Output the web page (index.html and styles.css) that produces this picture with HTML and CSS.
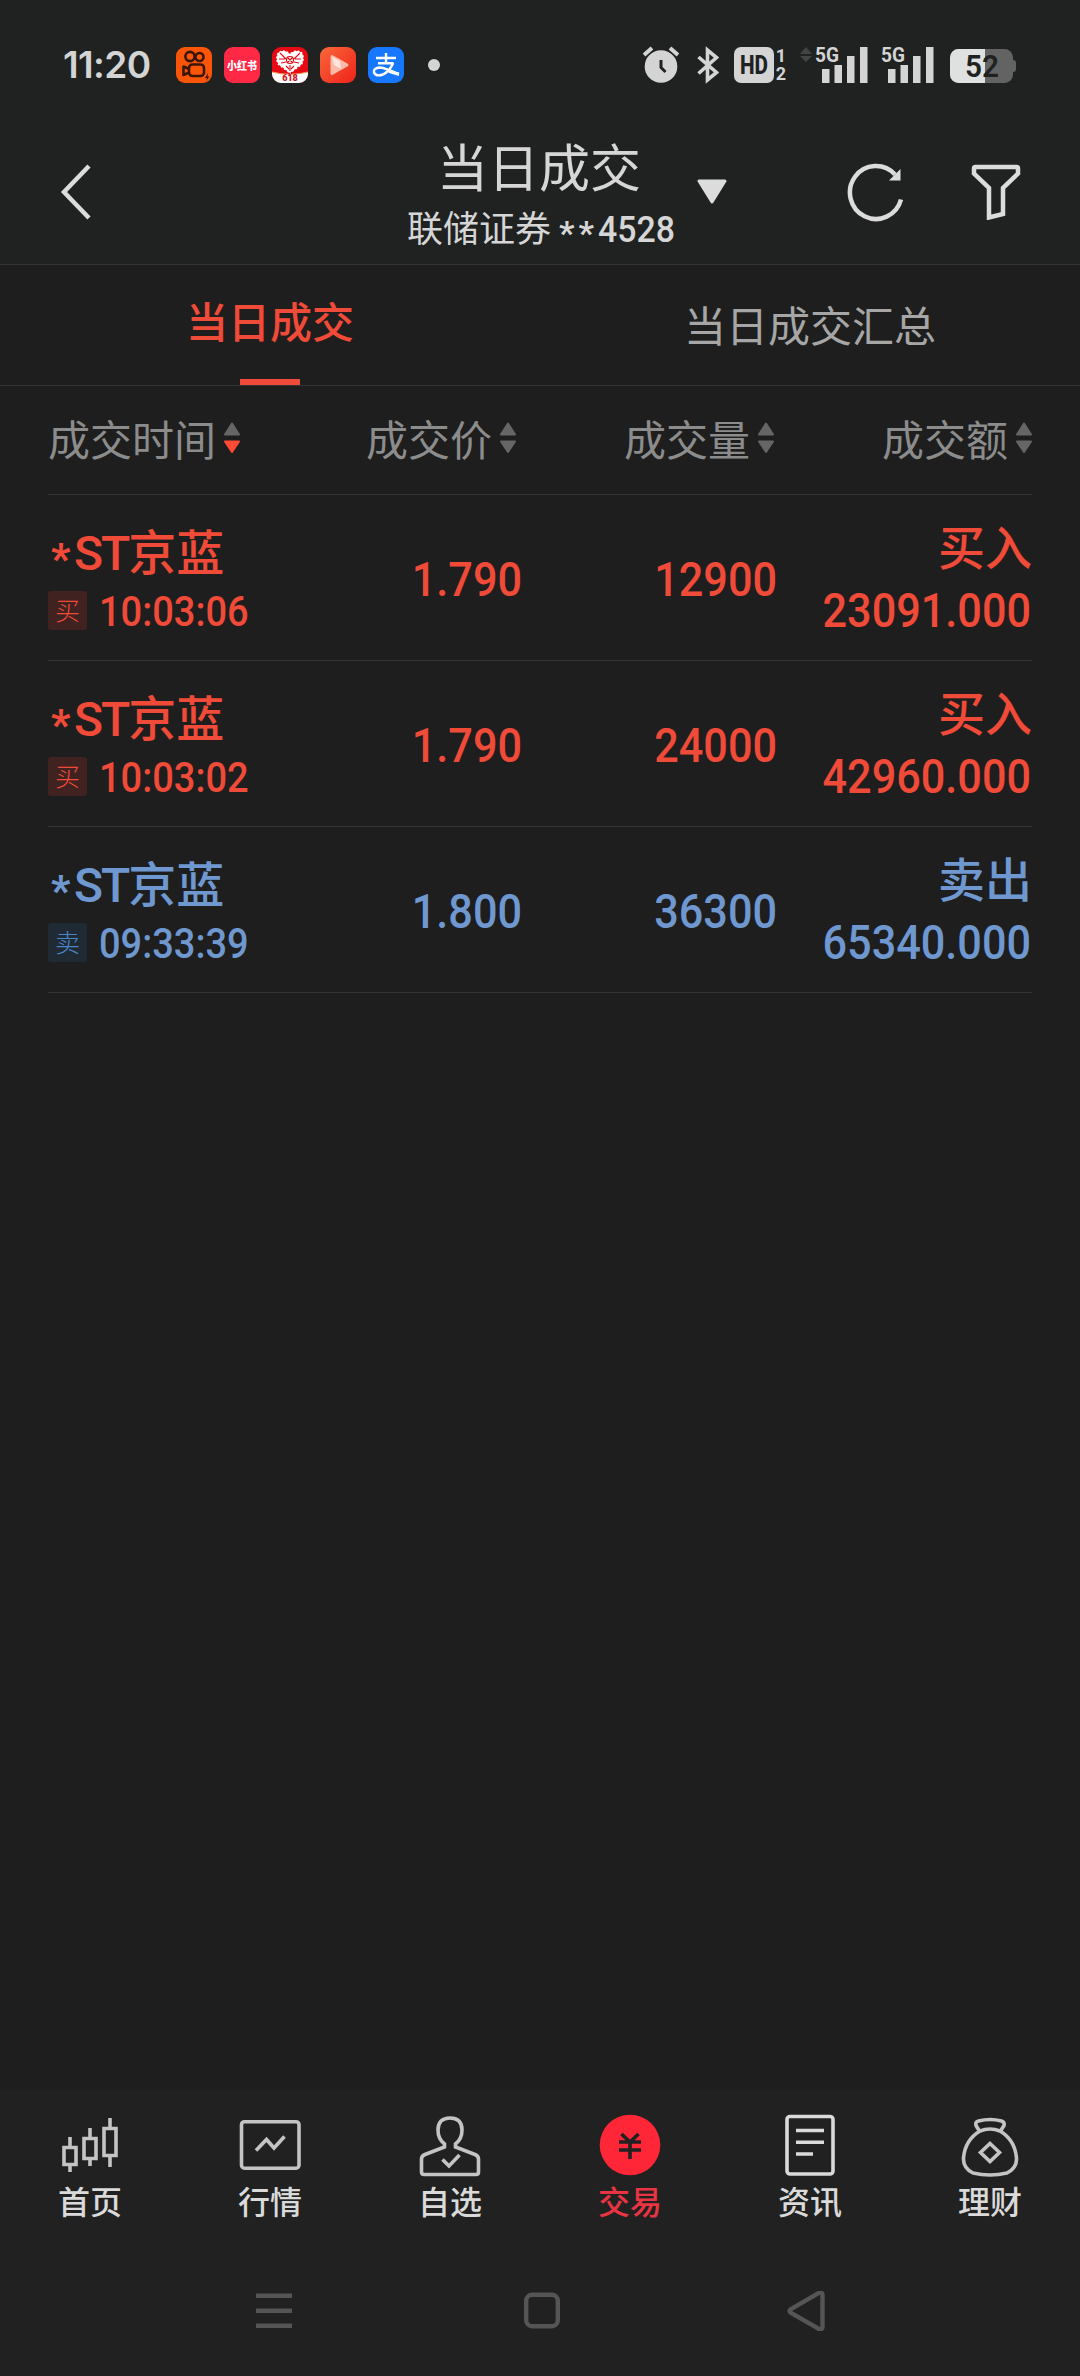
FILE: index.html
```html
<!DOCTYPE html>
<html lang="zh-CN">

<head>
    <meta charset="UTF-8">
    <meta name="viewport" content="width=device-width, initial-scale=1.0">
    <title>当日成交</title>
    <link rel="stylesheet" href="styles.css">
</head>

<body>
    <div class="top">
        <div class="status-bar">
            <span class="clock">11:20</span>
            <div class="app-icons">
                <svg width="36" height="36" viewBox="0 0 36 36">
                    <rect width="36" height="36" rx="9" fill="#fb5607" />
                    <g fill="none" stroke="#3a1508" stroke-width="2.6">
                        <circle cx="14" cy="9.5" r="4.6" />
                        <circle cx="23.5" cy="10" r="4" />
                        <rect x="13" y="17.5" width="15" height="11.5" rx="3.5" />
                        <path d="M13 22 L7.5 19.5 V28 L13 25.5" stroke-linejoin="round" />
                    </g>
                    <path d="M32 26 L29 31 H31 L30 34 L33.5 29.5 H31.5 Z" fill="#3a1508" />
                </svg>
                <svg width="36" height="36" viewBox="0 0 36 36">
                    <rect width="36" height="36" rx="9" fill="#ff2845" />
                    <text x="18" y="22.5" class="logo-text" font-size="11" textLength="30" lengthAdjust="spacingAndGlyphs">小红书</text>
                </svg>
                <svg width="36" height="36" viewBox="0 0 36 36">
                    <rect width="36" height="36" rx="9" fill="#e60a14" />
                    <path d="M0 25 Q18 29.5 36 25 V27 A9 9 0 0 1 27 36 H9 A9 9 0 0 1 0 27 Z" fill="#fff" />
                    <path d="M0 25 Q18 29.5 36 25" fill="none" stroke="#f0a060" stroke-width="1.2" />
                    <path d="M18 27 L6 18 Q2 11 6 5 Q12 1 18 6 Q24 1 30 5 Q34 11 30 18 Z" fill="#fff" />
                    <path d="M18 27 L6 18 Q2 11 6 5 Q12 1 18 6 Q24 1 30 5 Q34 11 30 18 Z" fill="none" stroke="#e60a14" stroke-width="1.6" stroke-dasharray="2 2" />
                    <g fill="none" stroke="#e60a14" stroke-width="1.1">
                        <circle cx="18" cy="13" r="3.5" />
                        <path d="M15 10 L21 16 M21 10 L15 16 M8 6 L14 12 M28 6 L22 12 M7 12 H13 M23 12 H29 M9 16 L14 15 M27 16 L22 15 M18 18 V24 M14 19 L17 22 M22 19 L19 22" />
                    </g>
                    <text x="18" y="34.3" class="logo-618" font-size="9">618</text>
                </svg>
                <svg width="36" height="36" viewBox="0 0 36 36">
                    <defs>
                        <linearGradient id="play-bg" x1="0" y1="0" x2="1" y2="1">
                            <stop offset="0" stop-color="#f9683a" />
                            <stop offset="1" stop-color="#ef2219" />
                        </linearGradient>
                    </defs>
                    <rect width="36" height="36" rx="9" fill="url(#play-bg)" />
                    <path d="M12 9.5 L27 18 L12 26.5 Z" fill="#fbb9a6" stroke="#fbb9a6" stroke-width="3" stroke-linejoin="round" />
                    <path d="M12 9.5 L20 14 L21 22 L14 18 Z" fill="#fde4dc" />
                </svg>
                <svg width="36" height="36" viewBox="0 0 36 36">
                    <rect width="36" height="36" rx="9" fill="#1677ff" />
                    <g fill="none" stroke="#fff" stroke-width="2.4">
                        <path d="M8 11 H28 M18 6 V16 M10 16.3 H25.5" />
                        <path d="M25 16 Q22 24 15 27.5 Q8 30 6 25.5 Q5 21 12 20.5 Q17 21 31 27" />
                    </g>
                    <path d="M19 23 L31 25.5 V29 L21 26 Z" fill="#fff" />
                </svg>
            </div>
            <span class="dot"></span>

            <div class="system-icons">
                <svg class="alarm" width="36" height="38" viewBox="0 0 36 38">
                    <circle cx="18" cy="20.5" r="16.3" />
                    <path d="M1 9 L9 2 M27 2 L35 9" class="alarm-bells" />
                    <path d="M18 14 V21.5 L22.5 26" class="alarm-hands" />
                </svg>
                <svg class="bluetooth" width="22" height="38" viewBox="0 0 22 38">
                    <path d="M1.5 11 L19.5 26.5 L10.5 34 V4 L19.5 11.5 L1.5 27.5" />
                </svg>
                <svg class="hd" width="52" height="38" viewBox="0 0 52 38">
                    <rect x="0" y="1" width="40" height="36" rx="7" />
                    <text x="20" y="28" class="hd-text" textLength="28" lengthAdjust="spacingAndGlyphs">HD</text>
                    <text x="47" y="16" class="sim-text">1</text>
                    <text x="47" y="34" class="sim-text">2</text>
                </svg>
                <svg class="signal first" width="70" height="42" viewBox="0 -4 70 42">
                    <path d="M0 8 L6 1 L12 8 Z M0 10 L6 16 L12 10 Z" fill="#444" />
                    <text x="15" y="16" class="net-text" textLength="24" lengthAdjust="spacingAndGlyphs">5G</text>
                    <path d="M22 23 h7.5 v14 h-7.5 Z M34.5 19 h7.5 v18 h-7.5 Z M47 10 h7.5 v27 h-7.5 Z M60 1 h7.5 v36 h-7.5 Z" />
                </svg>
                <svg class="signal second" width="56" height="42" viewBox="14 -4 56 42">
                    <text x="15" y="16" class="net-text" textLength="24" lengthAdjust="spacingAndGlyphs">5G</text>
                    <path d="M22 23 h7.5 v14 h-7.5 Z M34.5 19 h7.5 v18 h-7.5 Z M47 10 h7.5 v27 h-7.5 Z M60 1 h7.5 v36 h-7.5 Z" />
                </svg>
                <svg class="battery" width="67" height="38" viewBox="0 0 67 38">
                    <rect x="0" y="3" width="63" height="34" rx="8.5" fill="#636363" />
                    <path d="M63 14 q3 0 3 3 v6 q0 3 -3 3 Z" fill="#636363" />
                    <path d="M35 3 H8.5 A8.5 8.5 0 0 0 0 11.5 V28.5 A8.5 8.5 0 0 0 8.5 37 H35 Z" fill="#dfe1e0" />
                    <text x="32" y="30.5" class="battery-text" textLength="34" lengthAdjust="spacingAndGlyphs">52</text>
                </svg>
            </div>
        </div>

        <header>
            <button class="back" aria-label="返回">
                <svg width="32" height="56" viewBox="0 0 32 56">
                    <path d="M29 2 L4 28 L29 54" />
                </svg>
            </button>
            <div class="account">
                <h1>当日成交</h1>
                <p>联储证券 <span class="mask">**</span><span class="digits">4528</span></p>
            </div>
            <svg class="caret" width="30" height="25" viewBox="0 0 30 25">
                <path d="M2 2 H28 L15 23 Z" />
            </svg>
            <button class="refresh" aria-label="刷新">
                <svg width="60" height="60" viewBox="0 0 60 60">
                    <path d="M55 37.5 A26 26.5 0 1 1 49 12.5" />
                    <path d="M54.5 7 V18.5 H43 Z" class="arrow" />
                </svg>
            </button>
            <button class="filter" aria-label="筛选">
                <svg width="50" height="56" viewBox="0 0 50 56">
                    <path d="M4.5 3 H45.5 Q47 3 47 4.5 V9.5 L32 24 V50 L18 53.5 V24 L3 9.5 V4.5 Q3 3 4.5 3 Z" />
                </svg>
            </button>
        </header>
    </div>

    <nav class="tabs">
        <a class="tab active">当日成交</a>
        <a class="tab">当日成交汇总</a>
    </nav>

    <main>
        <div class="list-head">
            <div>成交时间<svg class="sort down" width="16" height="32" viewBox="0 0 16 32"><path d="M8 1.5 L15 12.5 H1 Z" /><path d="M8 30 L15 19.5 H1 Z" class="low" /></svg></div>
            <div>成交价<svg class="sort" width="16" height="32" viewBox="0 0 16 32"><path d="M8 1.5 L15 12.5 H1 Z" /><path d="M8 30 L15 19.5 H1 Z" class="low" /></svg></div>
            <div>成交量<svg class="sort" width="16" height="32" viewBox="0 0 16 32"><path d="M8 1.5 L15 12.5 H1 Z" /><path d="M8 30 L15 19.5 H1 Z" class="low" /></svg></div>
            <div>成交额<svg class="sort" width="16" height="32" viewBox="0 0 16 32"><path d="M8 1.5 L15 12.5 H1 Z" /><path d="M8 30 L15 19.5 H1 Z" class="low" /></svg></div>
        </div>

        <div class="deal buy">
            <div class="stock">
                <div class="name"><span class="star">*</span><span class="st">ST</span>京蓝</div>
                <div class="when"><span class="badge">买</span><span class="time">10:03:06</span></div>
            </div>
            <div class="num">1.790</div>
            <div class="num">12900</div>
            <div class="amount">
                <div class="side">买入</div>
                <div class="num">23091.000</div>
            </div>
        </div>

        <div class="deal buy">
            <div class="stock">
                <div class="name"><span class="star">*</span><span class="st">ST</span>京蓝</div>
                <div class="when"><span class="badge">买</span><span class="time">10:03:02</span></div>
            </div>
            <div class="num">1.790</div>
            <div class="num">24000</div>
            <div class="amount">
                <div class="side">买入</div>
                <div class="num">42960.000</div>
            </div>
        </div>

        <div class="deal sell">
            <div class="stock">
                <div class="name"><span class="star">*</span><span class="st">ST</span>京蓝</div>
                <div class="when"><span class="badge">卖</span><span class="time">09:33:39</span></div>
            </div>
            <div class="num">1.800</div>
            <div class="num">36300</div>
            <div class="amount">
                <div class="side">卖出</div>
                <div class="num">65340.000</div>
            </div>
        </div>
    </main>

    <footer>
        <nav class="menu">
            <a>
                <svg width="64" height="68" viewBox="0 0 64 68">
                    <path d="M6 35.5 H18 V52.5 H6 Z M12 25 V35 M12 53 V60 M26 26.5 H38 V46.5 H26 Z M32 16 V26 M32 47 V54 M46 16.5 H58 V43.5 H46 Z M52 6 V16 M52 44 V55" />
                </svg>
                首页
            </a>
            <a>
                <svg width="64" height="68" viewBox="0 0 64 68">
                    <rect x="3.5" y="9.7" width="57.5" height="46.5" rx="3" />
                    <path d="M18 38.5 L28.5 27.5 L36 36 L46.5 24.5" />
                </svg>
                行情
            </a>
            <a>
                <svg width="64" height="68" viewBox="0 0 64 68">
                    <path d="M26.5 35 V32 Q20 27 20 18 Q20 6 32 6 Q44 6 44 18 Q44 27 37.5 32 V35 L57 42.5 Q60.5 44 60.5 47 V60 Q60.5 62.5 58 62.5 H6 Q3.5 62.5 3.5 60 V47 Q3.5 44 7 42.5 Z" />
                    <path d="M24.5 47.5 L31 54 L41.5 43" />
                </svg>
                自选
            </a>
            <a class="current">
                <svg width="64" height="68" viewBox="0 0 64 68">
                    <circle cx="32" cy="33" r="30.3" />
                    <path d="M23.5 22 L32 30 L40.5 22 M21 30 H43 M21 38 H43 M32 29 V47" />
                </svg>
                交易
            </a>
            <a class="bright">
                <svg width="64" height="68" viewBox="0 0 64 68">
                    <rect x="9" y="4.5" width="46" height="57.5" rx="3" />
                    <path d="M18 18.5 H46 M18 30.2 H46 M18 42 H35" />
                </svg>
                资讯
            </a>
            <a>
                <svg width="64" height="68" viewBox="0 0 64 68">
                    <path d="M22 20 L18 13.5 Q17 10 20.5 9 Q32 6 43.5 9 Q47 10 46 13.5 L42 20" />
                    <path d="M22 19 Q32 15 42 19 Q57 28 58.5 46 Q59 56 49 61 Q32 65 15 61 Q5 56 5.5 46 Q7 28 22 19 Z" />
                    <path d="M32 31.5 L41.5 40.5 L32 49.5 L22.5 40.5 Z" />
                </svg>
                理财
            </a>
        </nav>
        <div class="gesture-bar">
            <svg width="36" height="40" viewBox="0 0 36 40">
                <path d="M0 4.7 H36 M0 19.7 H36 M0 34.7 H36" />
            </svg>
            <svg class="home" width="36" height="40" viewBox="0 0 36 40">
                <rect x="2.2" y="3.7" width="31.6" height="31.6" rx="6" />
            </svg>
            <svg width="38" height="40" viewBox="0 0 38 40">
                <path d="M32 1.8 Q35.5 1 35.5 4 V36 Q35.5 39 32 38 L4 22 Q1 20 4 18 Z" />
            </svg>
        </div>
    </footer>
</body>

</html>
```

FILE: styles.css
```css
:root {
    --bg: #1e1e1e;
    --bar: #202222;
    --footer: #212121;
    --line: #333;
    --light: #d6d6d6;
    --grey: #8c8c8c;
    --buy: #f04a38;
    --sell: #6e98cf;
    --red: #ff2638;
}

* {
    box-sizing: border-box;
    margin: 0;
    padding: 0;
}

body {
    display: flex;
    flex-direction: column;
    height: 2376px;
    overflow: hidden;
    background-color: var(--bg);
    color: var(--light);
    font-family: "Noto Sans CJK SC", sans-serif;
}

button {
    border: none;
    background: none;
    display: block;
}

svg {
    display: block;
    flex: none;
}

.top {
    height: 265px;
    background-color: var(--bar);
    border-bottom: 1px solid var(--line);
}

/* status bar */
.status-bar {
    display: flex;
    align-items: center;
    height: 130px;
    padding: 0 63px 0 63px;
}

.clock {
    width: 113px;
    font: 600 37px/40px "Inter", sans-serif;
    letter-spacing: -0.6px;
    color: #d4d4d4;
}

.app-icons {
    display: flex;
    gap: 12px;
}

.logo-text {
    fill: #fff;
    font-weight: 900;
    text-anchor: middle;
}

.logo-618 {
    fill: #d0101a;
    font-family: "Roboto", sans-serif;
    font-weight: 900;
    text-anchor: middle;
}

.dot {
    width: 12px;
    height: 12px;
    margin-left: 24px;
    border-radius: 50%;
    background-color: #d4d4d4;
}

.system-icons {
    display: flex;
    align-items: flex-end;
    margin: -4px 0 0 auto;
    fill: #d4d4d4;
    font-family: "Roboto", sans-serif;
}

.alarm-bells {
    stroke: #d4d4d4;
    stroke-width: 4;
}

.alarm-hands {
    fill: none;
    stroke: var(--bar);
    stroke-width: 3;
}

.bluetooth {
    margin-left: 18px;
    fill: none;
    stroke: #d4d4d4;
    stroke-width: 3.6;
}

.hd {
    margin-left: 15px;
}

.hd-text {
    fill: var(--bar);
    font-size: 25px;
    font-weight: 800;
    text-anchor: middle;
}

.sim-text {
    font-size: 18px;
    font-weight: 700;
    text-anchor: middle;
}

.net-text {
    font-size: 21px;
    font-weight: 700;
}

.signal.first {
    margin-left: 14px;
}

.signal.second {
    margin-left: 10px;
}

.battery {
    margin-left: 14px;
}

.battery-text {
    fill: var(--bar);
    font-size: 31px;
    font-weight: 600;
    text-anchor: middle;
}

/* title */
header {
    display: flex;
    align-items: flex-start;
    height: 134px;
    padding-left: 60px;
}

header button svg,
.menu svg,
.gesture-bar svg {
    fill: none;
    stroke: #dcdcdc;
    stroke-width: 4.5;
}

.back {
    margin-top: 34px;
}

.account {
    width: 264px;
    margin-left: 315px;
    text-align: center;
    white-space: nowrap;
}

h1 {
    margin-top: 5px;
    font-size: 51px;
    font-weight: 400;
    line-height: 60px;
}

.account p {
    margin-top: 7px;
    font-size: 36px;
    line-height: 48px;
    text-align: left;
}

.mask {
    font-family: "Roboto", sans-serif;
    font-size: 34px;
    font-weight: 700;
    line-height: 1;
    letter-spacing: 4px;
    vertical-align: -3px;
}

.digits {
    display: inline-block;
    font-family: "Roboto", sans-serif;
    font-weight: 500;
    transform: scaleX(0.94);
    transform-origin: left;
}

.caret {
    margin: 49px 0 0 26px;
    fill: #dcdcdc;
    stroke: #dcdcdc;
    stroke-width: 3;
    stroke-linejoin: round;
}

.refresh {
    margin: 32px 0 0 119px;
}

.refresh .arrow {
    fill: #dcdcdc;
    stroke: none;
}

.filter {
    margin: 34px 0 0 65px;
}

/* tabs */
.tabs {
    display: flex;
    height: 121px;
    border-bottom: 1px solid var(--line);
}

.tab {
    flex: 1;
    padding-top: 29px;
    color: #a6a6a6;
    font-size: 42px;
    line-height: 60px;
    text-align: center;
}

.tab.active {
    padding-top: 25px;
    color: var(--buy);
    font-weight: 500;
}

.tab.active::after {
    content: "";
    display: block;
    width: 60px;
    height: 6px;
    margin: 29px auto 0;
    background-color: var(--buy);
}

/* deals */
main {
    flex: 1;
    padding: 0 48px;
}

.list-head {
    display: grid;
    grid-template-columns: 210px 258px 258px 258px;
    height: 109px;
    border-bottom: 1px solid var(--line);
    color: var(--grey);
    font-size: 42px;
    line-height: 60px;
    padding-top: 22px;
    white-space: nowrap;
}

.list-head div {
    display: flex;
    align-items: center;
    justify-content: flex-end;
    height: 60px;
}

.list-head div:first-child {
    justify-content: flex-start;
}

.sort {
    margin-left: 8px;
    fill: #666;
    stroke: #666;
    stroke-width: 2;
    stroke-linejoin: round;
}

.sort.down .low {
    fill: #ff4a36;
    stroke: #ff4a36;
}

.deal {
    display: grid;
    grid-template-columns: 210px 264px 255px 255px;
    align-items: center;
    height: 166px;
    border-bottom: 1px solid var(--line);
    white-space: nowrap;
}

.buy {
    color: var(--buy);
}

.sell {
    color: var(--sell);
}

.stock {
    padding-bottom: 6px;
}

.name {
    font-size: 48px;
    font-weight: 500;
    line-height: 60px;
}

.star {
    display: inline-block;
    width: 26px;
    padding-left: 3px;
    font-family: "Roboto", sans-serif;
    font-size: 42px;
    font-weight: 800;
    vertical-align: -3px;
    line-height: 40px;
}

.st {
    font-family: "Roboto", sans-serif;
    letter-spacing: -2px;
}

.when {
    display: flex;
    align-items: center;
    height: 40px;
    margin-top: 6px;
}

.badge {
    flex: none;
    width: 39px;
    height: 39px;
    border-radius: 3px;
    background-color: #402221;
    font-size: 25px;
    font-weight: 300;
    line-height: 37px;
    text-align: center;
}

.sell .badge {
    background-color: #202a35;
    color: #4a86c6;
}

/* narrow digits */
.time {
    margin-left: 12px;
    padding-top: 3px;
    font: 500 42px/40px "Roboto", sans-serif;
    transform: scaleX(0.905);
    transform-origin: left;
}

.num {
    font: 500 48px/50px "Roboto", sans-serif;
    transform: scaleX(0.9);
    transform-origin: right;
    text-align: right;
    padding-top: 5px;
}

.amount {
    text-align: right;
}

.side {
    font-size: 47px;
    font-weight: 500;
    line-height: 60px;
}

.amount .num {
    margin: 4px 1px 0 0;
    padding-top: 2px;
    line-height: 60px;
}

/* bottom menu */
footer {
    height: 286px;
    background-color: var(--footer);
}

.menu {
    display: flex;
    height: 154px;
    padding-top: 22px;
}

.menu a {
    flex: 1;
    display: flex;
    flex-direction: column;
    align-items: center;
    color: #dadada;
    font-size: 32px;
    font-weight: 500;
    line-height: 41px;
}

.menu svg {
    stroke: #c4c4c4;
    stroke-width: 3.6;
}

.menu .bright svg {
    stroke: #dadada;
}

.menu .current {
    color: #e93442;
}

.menu .current circle {
    fill: var(--red);
    stroke: none;
}

.menu .current path {
    stroke: var(--footer);
}

.gesture-bar {
    display: flex;
    padding: 47px 0 0 256px;
}

.gesture-bar svg {
    stroke: #555;
    stroke-width: 4.4;
}

.gesture-bar .home {
    margin: 0 227px 0 232px;
}
```
